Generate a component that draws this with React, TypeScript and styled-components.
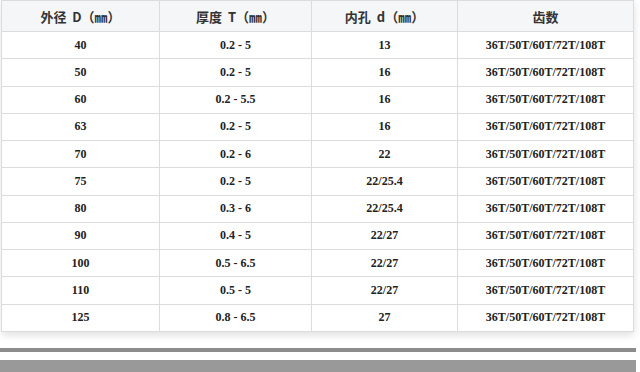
import React from "react";
import styled, { createGlobalStyle } from "styled-components";

const GlobalStyle = createGlobalStyle`
    body {
        margin: 0;
        background: #ffffff;
    }
`;

const Page = styled.div`
    width: 636px;
`;

const Card = styled.div`
    margin-left: 1px;
    width: 632px;
    box-shadow: 1px 3px 8px rgba(0, 0, 0, 0.13);
`;

const Table = styled.table`
    width: 632px;
    border-collapse: collapse;
    table-layout: fixed;
    font-family: "Liberation Serif", "Times New Roman", serif;
`;

const HeadCell = styled.th`
    height: 30px;
    padding: 0;
    border: 1px solid #dcdcdc;
    background: #f5f6f8;
    color: #333333;
    font-family: "Noto Sans CJK SC", "Liberation Sans", sans-serif;
    font-size: 13px;
    font-weight: 700;
    text-align: center;
    word-spacing: 3px;
`;

const Cell = styled.td`
    height: 26.27px;
    padding: 0;
    border: 1px solid #dcdcdc;
    color: #222222;
    font-size: 12px;
    font-weight: 700;
    text-align: center;
`;

const Rule = styled.div<{ $height: number; $gap: number; $color: string }>`
    margin-top: ${(p) => p.$gap}px;
    height: ${(p) => p.$height}px;
    background: ${(p) => p.$color};
`;

type RowType = {
    outer: string;
    thickness: string;
    bore: string;
    teeth: string;
};

const teeth = "36T/50T/60T/72T/108T";

const rows: RowType[] = [
    { outer: "40", thickness: "0.2 - 5", bore: "13", teeth },
    { outer: "50", thickness: "0.2 - 5", bore: "16", teeth },
    { outer: "60", thickness: "0.2 - 5.5", bore: "16", teeth },
    { outer: "63", thickness: "0.2 - 5", bore: "16", teeth },
    { outer: "70", thickness: "0.2 - 6", bore: "22", teeth },
    { outer: "75", thickness: "0.2 - 5", bore: "22/25.4", teeth },
    { outer: "80", thickness: "0.3 - 6", bore: "22/25.4", teeth },
    { outer: "90", thickness: "0.4 - 5", bore: "22/27", teeth },
    { outer: "100", thickness: "0.5 - 6.5", bore: "22/27", teeth },
    { outer: "110", thickness: "0.5 - 5", bore: "22/27", teeth },
    { outer: "125", thickness: "0.8 - 6.5", bore: "27", teeth },
];

const App: React.FC = () => {
    return (
        <Page>
            <GlobalStyle />
            <Card>
                <Table>
                    <colgroup>
                        <col style={{ width: 158 }} />
                        <col style={{ width: 152 }} />
                        <col style={{ width: 146 }} />
                        <col style={{ width: 176 }} />
                    </colgroup>
                    <thead>
                        <tr>
                            <HeadCell>外径 D（㎜）</HeadCell>
                            <HeadCell>厚度 T（㎜）</HeadCell>
                            <HeadCell>内孔 d（㎜）</HeadCell>
                            <HeadCell>齿数</HeadCell>
                        </tr>
                    </thead>
                    <tbody>
                        {rows.map((row) => (
                            <tr key={row.outer}>
                                <Cell>{row.outer}</Cell>
                                <Cell>{row.thickness}</Cell>
                                <Cell>{row.bore}</Cell>
                                <Cell>{row.teeth}</Cell>
                            </tr>
                        ))}
                    </tbody>
                </Table>
            </Card>
            <Rule $gap={16} $height={4} $color="#8c8c8c" />
            <Rule $gap={8} $height={14} $color="#999999" />
        </Page>
    );
};

export default App;
